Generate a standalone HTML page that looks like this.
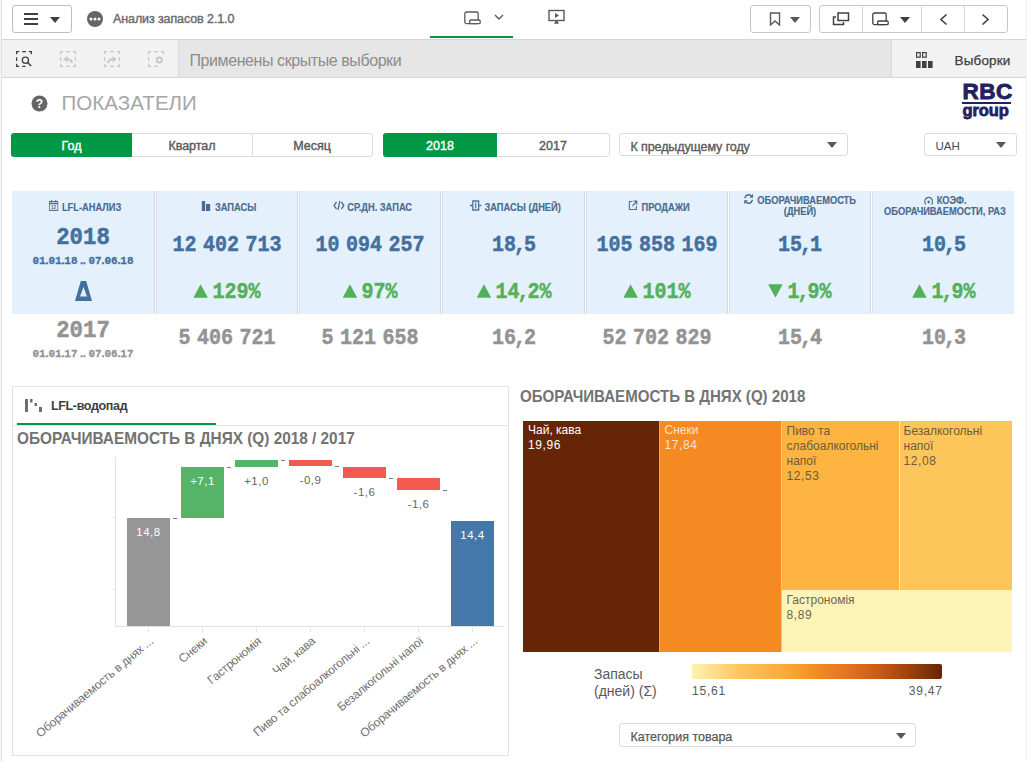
<!DOCTYPE html>
<html><head><meta charset="utf-8"><title>Анализ запасов</title>
<style>
html,body{margin:0;padding:0;}
body{width:1027px;height:761px;position:relative;overflow:hidden;background:#fff;font-family:'Liberation Sans', sans-serif;}
body>div,body>svg{position:absolute;box-sizing:border-box;}
.t{white-space:nowrap;}
.sp{display:inline-block;width:7.2px;overflow:hidden;}
.cm{margin:0 -2.3px;}
.dd{margin:0 -1.95px;}
</style></head><body>
<div style="left:0px;top:39px;width:1027px;height:1px;background:#d6d6d6"></div>
<div style="left:12px;top:5px;width:60px;height:28px;border:1px solid #bdbdbd;border-radius:3px;background:#fff"></div>
<div style="left:24px;top:13px;width:14px;height:2px;background:#404040"></div>
<div style="left:24px;top:18px;width:14px;height:2px;background:#404040"></div>
<div style="left:24px;top:23px;width:14px;height:2px;background:#404040"></div>
<svg style="left:50px;top:17px" width="10" height="6"><path d="M0 0H10L5 6Z" fill="#404040"/></svg>
<svg style="left:87px;top:11px" width="16" height="16"><circle cx="8" cy="8" r="8" fill="#666"/><circle cx="4" cy="8" r="1.5" fill="#fff"/><circle cx="8" cy="8" r="1.5" fill="#fff"/><circle cx="12" cy="8" r="1.5" fill="#fff"/></svg>
<div class="t" style="left:113px;top:12.62px;font-family:'Liberation Sans', sans-serif;font-size:12.5px;line-height:12.5px;color:#6a6a6a;font-weight:normal;letter-spacing:-0.1px;-webkit-text-stroke:0.4px;">Анализ запасов 2.1.0</div>
<div style="left:430px;top:36px;width:83px;height:2px;background:#009845"></div>
<svg style="left:464px;top:10.6px" width="18" height="14"><rect x="0.8" y="1" width="13.4" height="11.6" rx="1.6" fill="none" stroke="#5a5a5a" stroke-width="1.3"/><rect x="5.6" y="9" width="10.6" height="3.6" rx="1.2" fill="#fff" stroke="#5a5a5a" stroke-width="1.3"/></svg>
<svg style="left:494px;top:14px" width="10" height="7"><path d="M1 1L5 5L9 1" fill="none" stroke="#595959" stroke-width="1.4"/></svg>
<svg style="left:548px;top:9px" width="17" height="16"><rect x="1" y="1.5" width="15" height="10" fill="none" stroke="#595959" stroke-width="1.4"/><path d="M7 4L11 6.5L7 9Z" fill="#595959"/><path d="M7.6 12H9.4L11 14.8H6z" fill="#595959"/></svg>
<div style="left:750px;top:5px;width:61px;height:28px;border:1px solid #c8c8c8;border-radius:3px;background:#fff"></div>
<svg style="left:769px;top:12px" width="12" height="14"><path d="M1.5 1h9v12L6 9l-4.5 4z" fill="none" stroke="#595959" stroke-width="1.4"/></svg>
<svg style="left:790px;top:17px" width="10" height="6"><path d="M0 0H10L5 6Z" fill="#595959"/></svg>
<div style="left:819px;top:5px;width:189px;height:28px;border:1px solid #c8c8c8;border-radius:3px;background:#fff"></div>
<div style="left:862px;top:6px;width:1px;height:26px;background:#d6d6d6"></div>
<div style="left:921px;top:6px;width:1px;height:26px;background:#d6d6d6"></div>
<div style="left:964px;top:6px;width:1px;height:26px;background:#d6d6d6"></div>
<svg style="left:832px;top:12px" width="18" height="14"><rect x="6" y="1" width="10.5" height="7.5" fill="none" stroke="#404040" stroke-width="1.5"/><path d="M4 5H1.5v7.5h10V10" fill="none" stroke="#404040" stroke-width="1.5"/></svg>
<svg style="left:872px;top:12px" width="18" height="14"><rect x="0.8" y="1" width="13.4" height="11.6" rx="1.6" fill="none" stroke="#404040" stroke-width="1.3"/><rect x="5.6" y="9" width="10.6" height="3.6" rx="1.2" fill="#fff" stroke="#404040" stroke-width="1.3"/></svg>
<svg style="left:900px;top:17px" width="10" height="6"><path d="M0 0H10L5 6Z" fill="#404040"/></svg>
<svg style="left:939px;top:13px" width="9" height="13"><path d="M7.5 1.5L2 6.5L7.5 11.5" fill="none" stroke="#404040" stroke-width="1.6"/></svg>
<svg style="left:981px;top:13px" width="9" height="13"><path d="M1.5 1.5L7 6.5L1.5 11.5" fill="none" stroke="#404040" stroke-width="1.6"/></svg>
<div style="left:0px;top:40px;width:1027px;height:37px;background:#f2f2f2"></div>
<div style="left:179px;top:40px;width:712px;height:37px;background:#e6e6e6"></div>
<div style="left:178px;top:40px;width:1px;height:37px;background:#d9d9d9"></div>
<div style="left:891px;top:40px;width:1px;height:37px;background:#d9d9d9"></div>
<div style="left:0px;top:77px;width:1027px;height:1px;background:#d6d6d6"></div>
<svg style="left:16px;top:51px" width="17" height="17"><path d="M0.6 3.2V0.6H3.2M6.2 0.6H10M12.8 0.6H15.4V3.2M0.6 6.2V10M0.6 12.8V15.4H3.2M6.2 15.4H9.5" fill="none" stroke="#404040" stroke-width="1.3"/><circle cx="9.4" cy="9.2" r="3.1" fill="none" stroke="#404040" stroke-width="1.3"/><path d="M11.6 11.5L15.2 15" stroke="#404040" stroke-width="1.6"/></svg>
<svg style="left:60px;top:51px" width="17" height="17"><path d="M0.6 3.2V0.6H3.2M6.2 0.6H10M12.8 0.6H15.4V3.2M0.6 6.2V10M0.6 12.8V15.4H3.2M6.2 15.4H10M15.4 6.2V10M15.4 12.8V15.4H12.8" fill="none" stroke="#c8c8c8" stroke-width="1.3"/><path d="M12 12C11.5 9 9.5 8 6.5 8.3" fill="none" stroke="#c8c8c8" stroke-width="2"/><path d="M3.3 8.2L7.5 5v6.5z" fill="#c8c8c8"/></svg>
<svg style="left:104px;top:51px" width="17" height="17"><path d="M0.6 3.2V0.6H3.2M6.2 0.6H10M12.8 0.6H15.4V3.2M0.6 6.2V10M0.6 12.8V15.4H3.2M6.2 15.4H10M15.4 6.2V10M15.4 12.8V15.4H12.8" fill="none" stroke="#c8c8c8" stroke-width="1.3"/><path d="M4 12C4.5 9 6.5 8 9.5 8.3" fill="none" stroke="#c8c8c8" stroke-width="2"/><path d="M12.7 8.2L8.5 5v6.5z" fill="#c8c8c8"/></svg>
<svg style="left:148px;top:51px" width="17" height="17"><path d="M0.6 3.2V0.6H3.2M6.2 0.6H10M12.8 0.6H15.4V3.2M0.6 6.2V10M0.6 12.8V15.4H3.2M6.2 15.4H10" fill="none" stroke="#c8c8c8" stroke-width="1.3"/><circle cx="11.3" cy="9" r="2.6" fill="none" stroke="#c8c8c8" stroke-width="2"/></svg>
<div class="t" style="left:189.5px;top:52.65px;font-family:'Liberation Sans', sans-serif;font-size:16px;line-height:16px;color:#8c8c8c;font-weight:normal;letter-spacing:-0.42px;">Применены скрытые выборки</div>
<svg style="left:916px;top:52px" width="18" height="17"><rect x="0.6" y="0.6" width="3.6" height="4.6" fill="none" stroke="#404040" stroke-width="1.2"/><rect x="6.6" y="0.6" width="3.6" height="4.6" fill="none" stroke="#404040" stroke-width="1.2"/><rect x="0" y="9" width="4.6" height="7" fill="#404040"/><rect x="6" y="9" width="4.6" height="7" fill="#404040"/><rect x="12" y="9" width="4.6" height="7" fill="#404040"/></svg>
<div class="t" style="left:954.5px;top:54.07px;font-family:'Liberation Sans', sans-serif;font-size:13.5px;line-height:13.5px;color:#404040;font-weight:normal;letter-spacing:0.15px;-webkit-text-stroke:0.25px;">Выборки</div>
<svg style="left:31px;top:95px" width="17" height="17"><circle cx="8.5" cy="8.5" r="8" fill="#666"/><text x="8.5" y="13" font-family="Liberation Sans" font-weight="bold" font-size="12" fill="#fff" text-anchor="middle">?</text></svg>
<div class="t" style="left:61.5px;top:92.94px;font-family:'Liberation Sans', sans-serif;font-size:20.5px;line-height:20.5px;color:#a6a6a6;font-weight:normal;letter-spacing:0.05px;">ПОКАЗАТЕЛИ</div>
<div class="t" style="left:962.5px;top:81.15px;font-family:'Liberation Sans', sans-serif;font-size:22.5px;line-height:22.5px;color:#222260;font-weight:bold;letter-spacing:0.5px;-webkit-text-stroke:0.9px;">RBC</div>
<div style="left:962px;top:102px;width:49px;height:2px;background:#222260"></div>
<div class="t" style="left:962.5px;top:101.63px;font-family:'Liberation Sans', sans-serif;font-size:16.5px;line-height:16.5px;color:#222260;font-weight:bold;letter-spacing:-0.1px;-webkit-text-stroke:0.8px;">group</div>
<div style="left:11px;top:133px;width:362px;height:24px;border:1px solid #dcdcdc;border-radius:3px;background:#fff"></div>
<div style="left:11px;top:133px;width:121px;height:24px;background:#009845;border-radius:3px 0 0 3px"></div>
<div style="left:252px;top:134px;width:1px;height:22px;background:#dcdcdc"></div>
<div class="t" style="left:-228.5px;width:600px;text-align:center;top:140.22px;font-family:'Liberation Sans', sans-serif;font-size:12.5px;line-height:12.5px;color:#fff;font-weight:normal;letter-spacing:0px;-webkit-text-stroke:0.4px;">Год</div>
<div class="t" style="left:-108px;width:600px;text-align:center;top:140.22px;font-family:'Liberation Sans', sans-serif;font-size:12.5px;line-height:12.5px;color:#595959;font-weight:normal;letter-spacing:0px;-webkit-text-stroke:0.4px;">Квартал</div>
<div class="t" style="left:12px;width:600px;text-align:center;top:140.22px;font-family:'Liberation Sans', sans-serif;font-size:12.5px;line-height:12.5px;color:#595959;font-weight:normal;letter-spacing:0px;-webkit-text-stroke:0.4px;">Месяц</div>
<div style="left:383px;top:133px;width:227px;height:24px;border:1px solid #dcdcdc;border-radius:3px;background:#fff"></div>
<div style="left:383px;top:133px;width:114px;height:24px;background:#009845;border-radius:3px 0 0 3px"></div>
<div class="t" style="left:140px;width:600px;text-align:center;top:140.22px;font-family:'Liberation Sans', sans-serif;font-size:12.5px;line-height:12.5px;color:#fff;font-weight:normal;letter-spacing:0px;-webkit-text-stroke:0.4px;">2018</div>
<div class="t" style="left:253px;width:600px;text-align:center;top:140.22px;font-family:'Liberation Sans', sans-serif;font-size:12.5px;line-height:12.5px;color:#595959;font-weight:normal;letter-spacing:0px;-webkit-text-stroke:0.4px;">2017</div>
<div style="left:619px;top:133px;width:229px;height:23px;border:1px solid #dcdcdc;border-radius:3px;background:#fff"></div>
<div class="t" style="left:630.5px;top:140.72px;font-family:'Liberation Sans', sans-serif;font-size:12.5px;line-height:12.5px;color:#595959;font-weight:normal;letter-spacing:-0.1px;-webkit-text-stroke:0.35px;">К предыдущему году</div>
<svg style="left:827px;top:142px" width="10" height="6"><path d="M0 0H10L5 6Z" fill="#595959"/></svg>
<div style="left:924px;top:133px;width:93px;height:23px;border:1px solid #dcdcdc;border-radius:3px;background:#fff"></div>
<div class="t" style="left:935.5px;top:140.76px;font-family:'Liberation Sans', sans-serif;font-size:11.5px;line-height:11.5px;color:#404a5a;font-weight:normal;letter-spacing:0px;">UAH</div>
<svg style="left:996px;top:142px" width="10" height="6"><path d="M0 0H10L5 6Z" fill="#595959"/></svg>
<div style="left:12px;top:191px;width:1002px;height:123px;background:#e4f1fc"></div>
<div style="left:154px;top:191px;width:1px;height:123px;background:#d2d9e0"></div>
<div style="left:155px;top:191px;width:1px;height:123px;background:#fbfdff"></div>
<div style="left:156px;top:191px;width:1px;height:123px;background:#d8dfe6"></div>
<div style="left:297px;top:191px;width:1px;height:123px;background:#d2d9e0"></div>
<div style="left:298px;top:191px;width:1px;height:123px;background:#fbfdff"></div>
<div style="left:299px;top:191px;width:1px;height:123px;background:#d8dfe6"></div>
<div style="left:440px;top:191px;width:1px;height:123px;background:#d2d9e0"></div>
<div style="left:441px;top:191px;width:1px;height:123px;background:#fbfdff"></div>
<div style="left:442px;top:191px;width:1px;height:123px;background:#d8dfe6"></div>
<div style="left:584px;top:191px;width:1px;height:123px;background:#d2d9e0"></div>
<div style="left:585px;top:191px;width:1px;height:123px;background:#fbfdff"></div>
<div style="left:586px;top:191px;width:1px;height:123px;background:#d8dfe6"></div>
<div style="left:727px;top:191px;width:1px;height:123px;background:#d2d9e0"></div>
<div style="left:728px;top:191px;width:1px;height:123px;background:#fbfdff"></div>
<div style="left:729px;top:191px;width:1px;height:123px;background:#d8dfe6"></div>
<div style="left:870px;top:191px;width:1px;height:123px;background:#d2d9e0"></div>
<div style="left:871px;top:191px;width:1px;height:123px;background:#fbfdff"></div>
<div style="left:872px;top:191px;width:1px;height:123px;background:#d8dfe6"></div>
<div class="t" style="left:-215px;width:600px;text-align:center;top:202.31px;font-family:'Liberation Sans', sans-serif;font-size:10.5px;line-height:10.5px;color:#4a6a90;font-weight:bold;letter-spacing:0px;-webkit-text-stroke:0.15px;transform:scaleX(0.885);"><span style="display:inline-block;position:relative;width:15px;height:0"><svg width="11" height="11" style="position:absolute;left:0;bottom:0"><rect x="0.6" y="1.6" width="9.8" height="8.8" fill="none" stroke="#4a6a90" stroke-width="1.1"/><path d="M0.6 3.6h9.8M3 0v2.5M8 0v2.5" stroke="#4a6a90" stroke-width="1.1"/><text x="5.5" y="9" font-size="5" font-family="Liberation Sans" text-anchor="middle" fill="#4a6a90">12</text></svg></span>LFL-АНАЛИЗ</div>
<div class="t" style="left:-71px;width:600px;text-align:center;top:202.31px;font-family:'Liberation Sans', sans-serif;font-size:10.5px;line-height:10.5px;color:#4a6a90;font-weight:bold;letter-spacing:0px;-webkit-text-stroke:0.15px;transform:scaleX(0.885);"><span style="display:inline-block;position:relative;width:15px;height:0"><svg width="10" height="10" style="position:absolute;left:0;bottom:0"><rect x="0" y="0" width="4" height="10" fill="#4a6a90"/><rect x="5" y="3" width="5" height="7" fill="#4a6a90"/></svg></span>ЗАПАСЫ</div>
<div class="t" style="left:73.19999999999999px;width:600px;text-align:center;top:202.31px;font-family:'Liberation Sans', sans-serif;font-size:10.5px;line-height:10.5px;color:#4a6a90;font-weight:bold;letter-spacing:0px;-webkit-text-stroke:0.15px;transform:scaleX(0.885);"><span style="display:inline-block;position:relative;width:15px;height:0"><svg width="13" height="11" style="position:absolute;left:-1px;bottom:0"><path d="M3.8 2L0.9 5.5L3.8 9M9.2 2L12.1 5.5L9.2 9M7.6 1L5.4 10" fill="none" stroke="#4a6a90" stroke-width="1.4"/></svg></span>СР.ДН. ЗАПАС</div>
<div class="t" style="left:215.5px;width:600px;text-align:center;top:202.31px;font-family:'Liberation Sans', sans-serif;font-size:10.5px;line-height:10.5px;color:#4a6a90;font-weight:bold;letter-spacing:0px;-webkit-text-stroke:0.15px;transform:scaleX(0.885);"><span style="display:inline-block;position:relative;width:15px;height:0"><svg width="13" height="11" style="position:absolute;left:-1px;bottom:0"><path d="M0 5.5h2.5M10.5 5.5H13" stroke="#4a6a90" stroke-width="1.4"/><rect x="3.2" y="1" width="6.6" height="9" fill="none" stroke="#4a6a90" stroke-width="1.4"/><path d="M6.5 2.5v6" stroke="#4a6a90" stroke-width="1.3"/></svg></span>ЗАПАСЫ (ДНЕЙ)</div>
<div class="t" style="left:359px;width:600px;text-align:center;top:202.31px;font-family:'Liberation Sans', sans-serif;font-size:10.5px;line-height:10.5px;color:#4a6a90;font-weight:bold;letter-spacing:0px;-webkit-text-stroke:0.15px;transform:scaleX(0.885);"><span style="display:inline-block;position:relative;width:15px;height:0"><svg width="11" height="11" style="position:absolute;left:0;bottom:0"><path d="M5 1.5H1.5v8h8V6M6 1h4v4M10 1L5 6" fill="none" stroke="#4a6a90" stroke-width="1.2"/></svg></span>ПРОДАЖИ</div>
<div class="t" style="left:500px;width:600px;text-align:center;top:194.71px;font-family:'Liberation Sans', sans-serif;font-size:10.5px;line-height:10.5px;color:#4a6a90;font-weight:bold;letter-spacing:0px;-webkit-text-stroke:0.15px;transform:scaleX(0.885);"><span style="display:inline-block;position:relative;width:15px;height:0"><svg width="12" height="12" style="position:absolute;left:-1px;bottom:-1px"><path d="M1.6 5.2A4.5 4.5 0 0 1 9.6 3.6M10.4 6.8A4.5 4.5 0 0 1 2.4 8.4" fill="none" stroke="#4a6a90" stroke-width="1.5"/><path d="M11 0.8V4.8H7z M1 11.2V7.2H5z" fill="#4a6a90"/></svg></span>ОБОРАЧИВАЕМОСТЬ</div>
<div class="t" style="left:500px;width:600px;text-align:center;top:205.71px;font-family:'Liberation Sans', sans-serif;font-size:10.5px;line-height:10.5px;color:#4a6a90;font-weight:bold;letter-spacing:0px;-webkit-text-stroke:0.15px;transform:scaleX(0.885);">(ДНЕЙ)</div>
<div class="t" style="left:645.0px;width:600px;text-align:center;top:194.71px;font-family:'Liberation Sans', sans-serif;font-size:10.5px;line-height:10.5px;color:#4a6a90;font-weight:bold;letter-spacing:0px;-webkit-text-stroke:0.15px;transform:scaleX(0.885);"><span style="display:inline-block;position:relative;width:15px;height:0"><svg width="11" height="11" style="position:absolute;left:0;bottom:-2px"><path d="M2.2 9.5A4.3 4.3 0 1 1 8.8 9.5" fill="none" stroke="#4a6a90" stroke-width="1.4"/><circle cx="5.5" cy="7" r="1.4" fill="#4a6a90"/></svg></span>КОЭФ.</div>
<div class="t" style="left:645.0px;width:600px;text-align:center;top:205.71px;font-family:'Liberation Sans', sans-serif;font-size:10.5px;line-height:10.5px;color:#4a6a90;font-weight:bold;letter-spacing:0px;-webkit-text-stroke:0.15px;transform:scaleX(0.885);">ОБОРАЧИВАЕМОСТИ, РАЗ</div>
<div class="t" style="left:-217px;width:600px;text-align:center;top:226.98px;font-family:'Liberation Mono', monospace;font-size:23px;line-height:23px;color:#44709f;font-weight:bold;letter-spacing:0px;transform:scaleX(0.97);-webkit-text-stroke:0.5px;">2018</div>
<div class="t" style="left:-217px;width:600px;text-align:center;top:255.57px;font-family:'Liberation Mono', monospace;font-size:11px;line-height:11px;color:#44709f;font-weight:bold;letter-spacing:0px;-webkit-text-stroke:0.3px;">01<span class="dd">.</span>01<span class="dd">.</span>18<span class="dd"> </span><span class="dd">.</span><span class="dd">.</span><span class="dd"> </span>07<span class="dd">.</span>06<span class="dd">.</span>18</div>
<svg style="left:75px;top:281px" width="17" height="20"><path d="M5.8 0h5.4l5.8 20h-17z M8.5 6L5 15.5h7z" fill="#44709f" fill-rule="evenodd"/></svg>
<div class="t" style="left:-217px;width:600px;text-align:center;top:319.68px;font-family:'Liberation Mono', monospace;font-size:23px;line-height:23px;color:#939393;font-weight:bold;letter-spacing:0px;transform:scaleX(0.97);-webkit-text-stroke:0.5px;">2017</div>
<div class="t" style="left:-217px;width:600px;text-align:center;top:348.57px;font-family:'Liberation Mono', monospace;font-size:11px;line-height:11px;color:#939393;font-weight:bold;letter-spacing:0px;-webkit-text-stroke:0.3px;">01<span class="dd">.</span>01<span class="dd">.</span>17<span class="dd"> </span><span class="dd">.</span><span class="dd">.</span><span class="dd"> </span>07<span class="dd">.</span>06<span class="dd">.</span>17</div>
<div class="t" style="left:-73px;width:600px;text-align:center;top:234.65px;font-family:'Liberation Mono', monospace;font-size:22px;line-height:22px;color:#44709f;font-weight:bold;letter-spacing:0px;transform:scaleX(0.91);-webkit-text-stroke:0.5px;">12<span class="sp"> </span>402<span class="sp"> </span>713</div>
<div class="t" style="left:-73px;width:600px;text-align:center;top:282.35px;font-family:'Liberation Mono', monospace;font-size:22px;line-height:22px;color:#55b05a;font-weight:bold;letter-spacing:0px;transform:scaleX(0.91);-webkit-text-stroke:0.5px;"><svg width="16" height="14" style="margin-right:5px"><path d="M8 0.3L16 13.8H0z" fill="#52b05a"/></svg>129%</div>
<div class="t" style="left:-73px;width:600px;text-align:center;top:328.35px;font-family:'Liberation Mono', monospace;font-size:22px;line-height:22px;color:#939393;font-weight:bold;letter-spacing:0px;transform:scaleX(0.91);-webkit-text-stroke:0.5px;">5<span class="sp"> </span>406<span class="sp"> </span>721</div>
<div class="t" style="left:70px;width:600px;text-align:center;top:234.65px;font-family:'Liberation Mono', monospace;font-size:22px;line-height:22px;color:#44709f;font-weight:bold;letter-spacing:0px;transform:scaleX(0.91);-webkit-text-stroke:0.5px;">10<span class="sp"> </span>094<span class="sp"> </span>257</div>
<div class="t" style="left:70px;width:600px;text-align:center;top:282.35px;font-family:'Liberation Mono', monospace;font-size:22px;line-height:22px;color:#55b05a;font-weight:bold;letter-spacing:0px;transform:scaleX(0.91);-webkit-text-stroke:0.5px;"><svg width="16" height="14" style="margin-right:5px"><path d="M8 0.3L16 13.8H0z" fill="#52b05a"/></svg>97%</div>
<div class="t" style="left:70px;width:600px;text-align:center;top:328.35px;font-family:'Liberation Mono', monospace;font-size:22px;line-height:22px;color:#939393;font-weight:bold;letter-spacing:0px;transform:scaleX(0.91);-webkit-text-stroke:0.5px;">5<span class="sp"> </span>121<span class="sp"> </span>658</div>
<div class="t" style="left:213.5px;width:600px;text-align:center;top:234.65px;font-family:'Liberation Mono', monospace;font-size:22px;line-height:22px;color:#44709f;font-weight:bold;letter-spacing:0px;transform:scaleX(0.91);-webkit-text-stroke:0.5px;">18<span class="cm">,</span>5</div>
<div class="t" style="left:213.5px;width:600px;text-align:center;top:282.35px;font-family:'Liberation Mono', monospace;font-size:22px;line-height:22px;color:#55b05a;font-weight:bold;letter-spacing:0px;transform:scaleX(0.91);-webkit-text-stroke:0.5px;"><svg width="16" height="14" style="margin-right:5px"><path d="M8 0.3L16 13.8H0z" fill="#52b05a"/></svg>14<span class="cm">,</span>2%</div>
<div class="t" style="left:213.5px;width:600px;text-align:center;top:328.35px;font-family:'Liberation Mono', monospace;font-size:22px;line-height:22px;color:#939393;font-weight:bold;letter-spacing:0px;transform:scaleX(0.91);-webkit-text-stroke:0.5px;">16<span class="cm">,</span>2</div>
<div class="t" style="left:357px;width:600px;text-align:center;top:234.65px;font-family:'Liberation Mono', monospace;font-size:22px;line-height:22px;color:#44709f;font-weight:bold;letter-spacing:0px;transform:scaleX(0.91);-webkit-text-stroke:0.5px;">105<span class="sp"> </span>858<span class="sp"> </span>169</div>
<div class="t" style="left:357px;width:600px;text-align:center;top:282.35px;font-family:'Liberation Mono', monospace;font-size:22px;line-height:22px;color:#55b05a;font-weight:bold;letter-spacing:0px;transform:scaleX(0.91);-webkit-text-stroke:0.5px;"><svg width="16" height="14" style="margin-right:5px"><path d="M8 0.3L16 13.8H0z" fill="#52b05a"/></svg>101%</div>
<div class="t" style="left:357px;width:600px;text-align:center;top:328.35px;font-family:'Liberation Mono', monospace;font-size:22px;line-height:22px;color:#939393;font-weight:bold;letter-spacing:0px;transform:scaleX(0.91);-webkit-text-stroke:0.5px;">52<span class="sp"> </span>702<span class="sp"> </span>829</div>
<div class="t" style="left:500px;width:600px;text-align:center;top:234.65px;font-family:'Liberation Mono', monospace;font-size:22px;line-height:22px;color:#44709f;font-weight:bold;letter-spacing:0px;transform:scaleX(0.91);-webkit-text-stroke:0.5px;">15<span class="cm">,</span>1</div>
<div class="t" style="left:500px;width:600px;text-align:center;top:282.35px;font-family:'Liberation Mono', monospace;font-size:22px;line-height:22px;color:#55b05a;font-weight:bold;letter-spacing:0px;transform:scaleX(0.91);-webkit-text-stroke:0.5px;"><svg width="16" height="14" style="margin-right:5px"><path d="M0 0.2H16L8 13.7z" fill="#52b05a"/></svg>1<span class="cm">,</span>9%</div>
<div class="t" style="left:500px;width:600px;text-align:center;top:328.35px;font-family:'Liberation Mono', monospace;font-size:22px;line-height:22px;color:#939393;font-weight:bold;letter-spacing:0px;transform:scaleX(0.91);-webkit-text-stroke:0.5px;">15<span class="cm">,</span>4</div>
<div class="t" style="left:643.5px;width:600px;text-align:center;top:234.65px;font-family:'Liberation Mono', monospace;font-size:22px;line-height:22px;color:#44709f;font-weight:bold;letter-spacing:0px;transform:scaleX(0.91);-webkit-text-stroke:0.5px;">10<span class="cm">,</span>5</div>
<div class="t" style="left:643.5px;width:600px;text-align:center;top:282.35px;font-family:'Liberation Mono', monospace;font-size:22px;line-height:22px;color:#55b05a;font-weight:bold;letter-spacing:0px;transform:scaleX(0.91);-webkit-text-stroke:0.5px;"><svg width="16" height="14" style="margin-right:5px"><path d="M8 0.3L16 13.8H0z" fill="#52b05a"/></svg>1<span class="cm">,</span>9%</div>
<div class="t" style="left:643.5px;width:600px;text-align:center;top:328.35px;font-family:'Liberation Mono', monospace;font-size:22px;line-height:22px;color:#939393;font-weight:bold;letter-spacing:0px;transform:scaleX(0.91);-webkit-text-stroke:0.5px;">10<span class="cm">,</span>3</div>
<div style="left:12px;top:386px;width:497px;height:370px;border:1px solid #e3e3e3;background:#fff"></div>
<svg style="left:25px;top:399px" width="18" height="14"><rect x="0" y="0" width="3" height="13" fill="#6e6e6e"/><rect x="5" y="0" width="2.5" height="3.5" fill="#6e6e6e"/><rect x="9.5" y="4" width="2.5" height="3" fill="#6e6e6e"/><rect x="14" y="8" width="3" height="5" fill="#6e6e6e"/></svg>
<div class="t" style="left:51px;top:400.12px;font-family:'Liberation Sans', sans-serif;font-size:12.5px;line-height:12.5px;color:#404040;font-weight:bold;letter-spacing:-0.35px;">LFL-водопад</div>
<div style="left:13px;top:425px;width:495px;height:1px;background:#e6e6e6"></div>
<div style="left:17px;top:423px;width:199px;height:2px;background:#009845"></div>
<div class="t" style="left:16.5px;top:429.81px;font-family:'Liberation Sans', sans-serif;font-size:17px;line-height:17px;color:#737373;font-weight:bold;letter-spacing:0px;transform-origin:0 0;transform:scaleX(0.903);">ОБОРАЧИВАЕМОСТЬ В ДНЯХ (Q) 2018 / 2017</div>
<div style="left:115px;top:457px;width:1px;height:169px;background:#e3e3e3"></div>
<div style="left:115px;top:626px;width:389px;height:1px;background:#e0e0e0"></div>
<div style="left:112px;top:517px;width:3px;height:1px;background:#efefef"></div>
<div style="left:112px;top:589px;width:3px;height:1px;background:#efefef"></div>
<div style="left:148px;top:627px;width:1px;height:5px;background:#e6e6e6"></div>
<div style="left:202px;top:627px;width:1px;height:5px;background:#e6e6e6"></div>
<div style="left:256px;top:627px;width:1px;height:5px;background:#e6e6e6"></div>
<div style="left:310px;top:627px;width:1px;height:5px;background:#e6e6e6"></div>
<div style="left:364px;top:627px;width:1px;height:5px;background:#e6e6e6"></div>
<div style="left:418px;top:627px;width:1px;height:5px;background:#e6e6e6"></div>
<div style="left:472px;top:627px;width:1px;height:5px;background:#e6e6e6"></div>
<div style="left:127px;top:518px;width:43px;height:108px;background:#969696"></div>
<div style="left:181px;top:467px;width:43px;height:51px;background:#56b469"></div>
<div style="left:235px;top:459.5px;width:43px;height:7.5px;background:#56b469"></div>
<div style="left:289px;top:460px;width:43px;height:6px;background:#f25a52"></div>
<div style="left:343px;top:466.5px;width:43px;height:11.5px;background:#f25a52"></div>
<div style="left:397px;top:478px;width:43px;height:12px;background:#f25a52"></div>
<div style="left:451px;top:521px;width:43px;height:105px;background:#4477aa"></div>
<div style="left:172.5px;top:518px;width:4px;height:1px;background:#7a7a7a"></div>
<div style="left:226.5px;top:467px;width:4px;height:1px;background:#7a7a7a"></div>
<div style="left:280.5px;top:459.5px;width:4px;height:1px;background:#7a7a7a"></div>
<div style="left:334.5px;top:466px;width:4px;height:1px;background:#7a7a7a"></div>
<div style="left:388.5px;top:478px;width:4px;height:1px;background:#7a7a7a"></div>
<div style="left:442.5px;top:490px;width:4px;height:1px;background:#7a7a7a"></div>
<div class="t" style="left:-151.5px;width:600px;text-align:center;top:527.06px;font-family:'Liberation Sans', sans-serif;font-size:11.5px;line-height:11.5px;color:#fff;font-weight:normal;letter-spacing:0.5px;">14,8</div>
<div class="t" style="left:-97.5px;width:600px;text-align:center;top:476.06px;font-family:'Liberation Sans', sans-serif;font-size:11.5px;line-height:11.5px;color:#fff;font-weight:normal;letter-spacing:0.5px;">+7,1</div>
<div class="t" style="left:-43.5px;width:600px;text-align:center;top:475.56px;font-family:'Liberation Sans', sans-serif;font-size:11.5px;line-height:11.5px;color:#666;font-weight:normal;letter-spacing:0.5px;">+1,0</div>
<div class="t" style="left:10.5px;width:600px;text-align:center;top:475.06px;font-family:'Liberation Sans', sans-serif;font-size:11.5px;line-height:11.5px;color:#666;font-weight:normal;letter-spacing:0.5px;">-0,9</div>
<div class="t" style="left:64.5px;width:600px;text-align:center;top:486.56px;font-family:'Liberation Sans', sans-serif;font-size:11.5px;line-height:11.5px;color:#666;font-weight:normal;letter-spacing:0.5px;">-1,6</div>
<div class="t" style="left:118.5px;width:600px;text-align:center;top:499.06px;font-family:'Liberation Sans', sans-serif;font-size:11.5px;line-height:11.5px;color:#666;font-weight:normal;letter-spacing:0.5px;">-1,6</div>
<div class="t" style="left:172.5px;width:600px;text-align:center;top:529.76px;font-family:'Liberation Sans', sans-serif;font-size:11.5px;line-height:11.5px;color:#fff;font-weight:normal;letter-spacing:0.5px;">14,4</div>
<div class="t" style="left:-253.5px;top:633.5px;width:400px;text-align:right;font-family:'Liberation Sans', sans-serif;font-size:12px;line-height:14px;color:#707070;transform-origin:100% 0;transform:rotate(-40deg);letter-spacing:-0.2px">Оборачиваемость в днях ...</div>
<div class="t" style="left:-199.5px;top:633.5px;width:400px;text-align:right;font-family:'Liberation Sans', sans-serif;font-size:12px;line-height:14px;color:#707070;transform-origin:100% 0;transform:rotate(-40deg);letter-spacing:-0.2px">Снеки</div>
<div class="t" style="left:-145.5px;top:633.5px;width:400px;text-align:right;font-family:'Liberation Sans', sans-serif;font-size:12px;line-height:14px;color:#707070;transform-origin:100% 0;transform:rotate(-40deg);letter-spacing:-0.2px">Гастрономія</div>
<div class="t" style="left:-91.5px;top:633.5px;width:400px;text-align:right;font-family:'Liberation Sans', sans-serif;font-size:12px;line-height:14px;color:#707070;transform-origin:100% 0;transform:rotate(-40deg);letter-spacing:-0.2px">Чай, кава</div>
<div class="t" style="left:-37.5px;top:633.5px;width:400px;text-align:right;font-family:'Liberation Sans', sans-serif;font-size:12px;line-height:14px;color:#707070;transform-origin:100% 0;transform:rotate(-40deg);letter-spacing:-0.2px">Пиво та слабоалкогольні ...</div>
<div class="t" style="left:16.5px;top:633.5px;width:400px;text-align:right;font-family:'Liberation Sans', sans-serif;font-size:12px;line-height:14px;color:#707070;transform-origin:100% 0;transform:rotate(-40deg);letter-spacing:-0.2px">Безалкогольні напої</div>
<div class="t" style="left:70.5px;top:633.5px;width:400px;text-align:right;font-family:'Liberation Sans', sans-serif;font-size:12px;line-height:14px;color:#707070;transform-origin:100% 0;transform:rotate(-40deg);letter-spacing:-0.2px">Оборачиваемость в днях ...</div>
<div class="t" style="left:519.5px;top:387.81px;font-family:'Liberation Sans', sans-serif;font-size:17px;line-height:17px;color:#737373;font-weight:bold;letter-spacing:0px;transform-origin:0 0;transform:scaleX(0.886);">ОБОРАЧИВАЕМОСТЬ В ДНЯХ (Q) 2018</div>
<div style="left:523px;top:421px;width:137px;height:231px;background:#662506"></div>
<div style="left:660px;top:421px;width:122px;height:231px;background:#f58a22"></div>
<div style="left:782px;top:421px;width:117px;height:169px;background:#fdb441"></div>
<div style="left:899px;top:421px;width:113px;height:169px;background:#fdc65a"></div>
<div style="left:782px;top:590px;width:230px;height:62px;background:#fff4b8"></div>
<div style="left:659px;top:421px;width:1px;height:231px;background:#f4a05a"></div>
<div style="left:781px;top:421px;width:1px;height:231px;background:#fcc27a"></div>
<div style="left:899px;top:421px;width:1px;height:169px;background:#fde3a8"></div>
<div class="t" style="left:528px;top:424.44px;font-family:'Liberation Sans', sans-serif;font-size:12px;line-height:12px;color:#ffffff;font-weight:normal;letter-spacing:0px;">Чай, кава</div>
<div class="t" style="left:528px;top:439.44px;font-family:'Liberation Sans', sans-serif;font-size:12px;line-height:12px;color:#ffffff;font-weight:normal;letter-spacing:0.6px;">19,96</div>
<div class="t" style="left:664.5px;top:424.44px;font-family:'Liberation Sans', sans-serif;font-size:12px;line-height:12px;color:#fde3c8;font-weight:normal;letter-spacing:0px;">Снеки</div>
<div class="t" style="left:664.5px;top:439.44px;font-family:'Liberation Sans', sans-serif;font-size:12px;line-height:12px;color:#fde3c8;font-weight:normal;letter-spacing:0.6px;">17,84</div>
<div class="t" style="left:786.5px;top:424.84px;font-family:'Liberation Sans', sans-serif;font-size:12px;line-height:12px;color:#6e5a3c;font-weight:normal;letter-spacing:0px;">Пиво та</div>
<div class="t" style="left:786.5px;top:439.84px;font-family:'Liberation Sans', sans-serif;font-size:12px;line-height:12px;color:#6e5a3c;font-weight:normal;letter-spacing:0px;">слабоалкогольні</div>
<div class="t" style="left:786.5px;top:454.84px;font-family:'Liberation Sans', sans-serif;font-size:12px;line-height:12px;color:#6e5a3c;font-weight:normal;letter-spacing:0px;">напої</div>
<div class="t" style="left:786.5px;top:469.84px;font-family:'Liberation Sans', sans-serif;font-size:12px;line-height:12px;color:#6e5a3c;font-weight:normal;letter-spacing:0.6px;">12,53</div>
<div class="t" style="left:903.5px;top:424.84px;font-family:'Liberation Sans', sans-serif;font-size:12px;line-height:12px;color:#6e5a3c;font-weight:normal;letter-spacing:0px;">Безалкогольні</div>
<div class="t" style="left:903.5px;top:439.84px;font-family:'Liberation Sans', sans-serif;font-size:12px;line-height:12px;color:#6e5a3c;font-weight:normal;letter-spacing:0px;">напої</div>
<div class="t" style="left:903.5px;top:454.84px;font-family:'Liberation Sans', sans-serif;font-size:12px;line-height:12px;color:#6e5a3c;font-weight:normal;letter-spacing:0.6px;">12,08</div>
<div class="t" style="left:786.5px;top:594.14px;font-family:'Liberation Sans', sans-serif;font-size:12px;line-height:12px;color:#6e6650;font-weight:normal;letter-spacing:0px;">Гастрономія</div>
<div class="t" style="left:786.5px;top:609.14px;font-family:'Liberation Sans', sans-serif;font-size:12px;line-height:12px;color:#6e6650;font-weight:normal;letter-spacing:0.6px;">8,89</div>
<div class="t" style="left:594px;top:667.15px;font-family:'Liberation Sans', sans-serif;font-size:14px;line-height:14px;color:#595959;font-weight:normal;letter-spacing:0px;">Запасы</div>
<div class="t" style="left:594px;top:684.45px;font-family:'Liberation Sans', sans-serif;font-size:14px;line-height:14px;color:#595959;font-weight:normal;letter-spacing:0px;">(дней) (Σ)</div>
<div style="left:692px;top:664px;width:250px;height:15px;background:linear-gradient(to right,#fff2b0 0%,#fdc35a 20%,#fba838 38%,#f38b22 50%,#e57320 62%,#c95a14 75%,#9a3f0c 88%,#662506 100%);border-radius:0 2px 2px 0"></div>
<div class="t" style="left:692px;top:685.04px;font-family:'Liberation Sans', sans-serif;font-size:12px;line-height:12px;color:#595959;font-weight:normal;letter-spacing:0.8px;">15,61</div>
<div class="t" style="left:342.79999999999995px;width:600px;text-align:right;top:685.04px;font-family:'Liberation Sans', sans-serif;font-size:12px;line-height:12px;color:#595959;font-weight:normal;letter-spacing:0.8px;">39,47</div>
<div style="left:619px;top:723px;width:297px;height:24px;border:1px solid #dcdcdc;border-radius:3px;background:#fff"></div>
<div class="t" style="left:630.5px;top:731.02px;font-family:'Liberation Sans', sans-serif;font-size:12.5px;line-height:12.5px;color:#595959;font-weight:normal;letter-spacing:0px;-webkit-text-stroke:0.25px;">Категория товара</div>
<svg style="left:896px;top:733px" width="10" height="6"><path d="M0 0H10L5 6Z" fill="#595959"/></svg>
<div style="left:0px;top:0px;width:1px;height:761px;background:#f4f4f4"></div>
<div style="left:1px;top:0px;width:1px;height:761px;background:#e2e2e2"></div>
<div style="left:1026px;top:0px;width:1px;height:761px;background:#eff1f3"></div>
</body></html>
